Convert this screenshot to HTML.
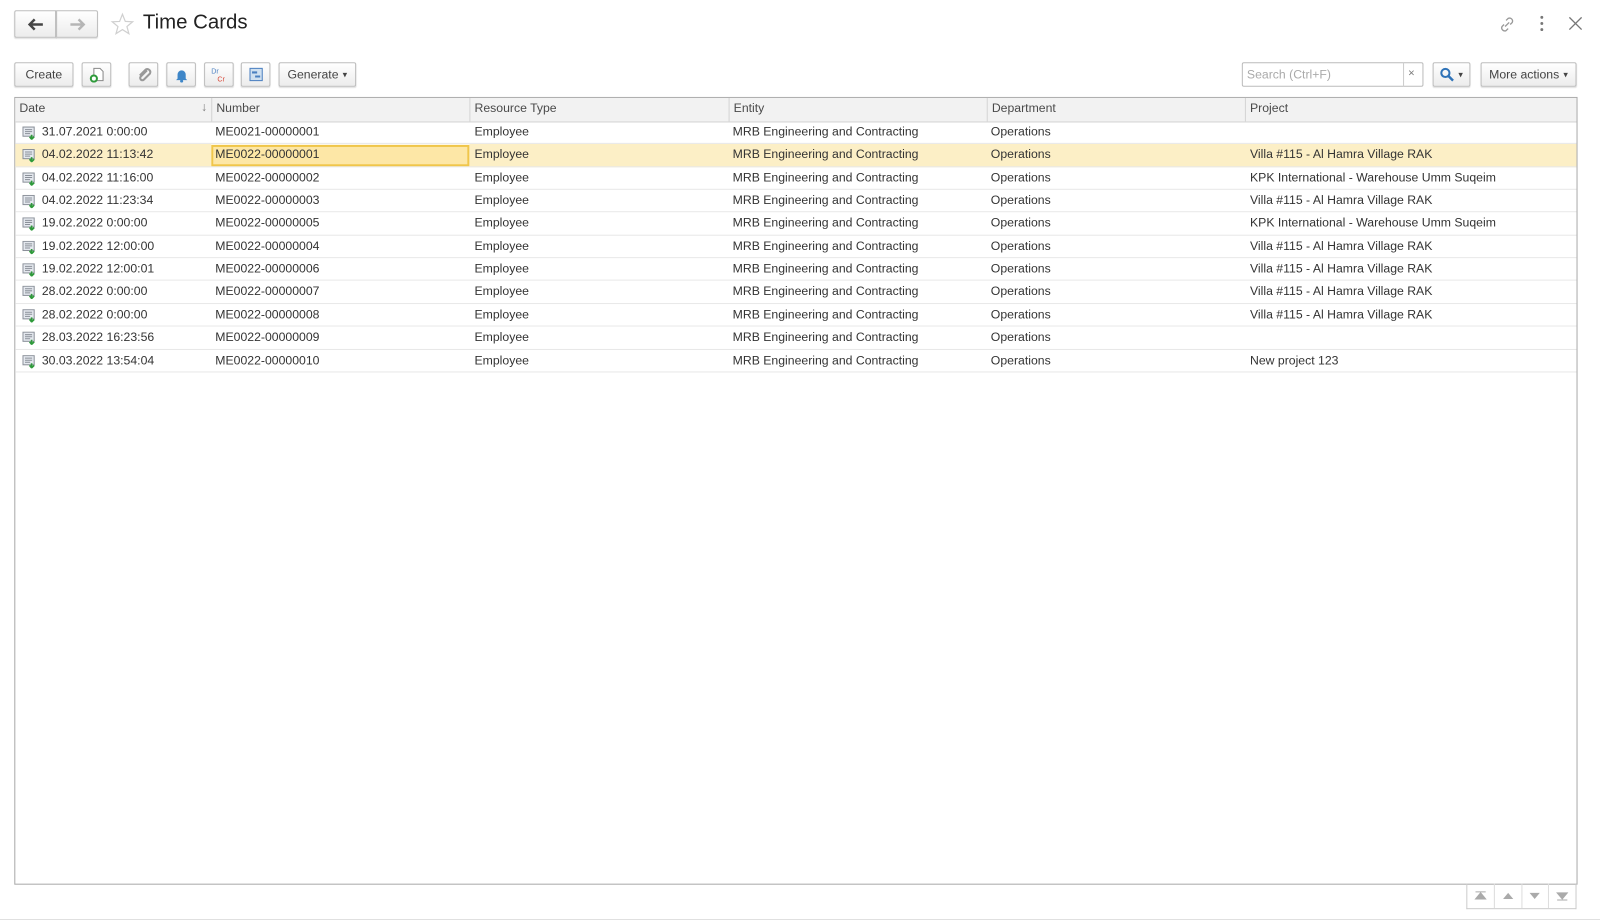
<!DOCTYPE html>
<html><head><meta charset="utf-8"><style>
*{box-sizing:border-box;margin:0;padding:0}
body{width:1600px;height:920px;background:#fff;font-family:"Liberation Sans",sans-serif;color:#404040;overflow:hidden;font-size:12px}
#wrap{position:absolute;left:0;top:0;width:1568px;height:902px;transform:scale(1.0204);transform-origin:0 0}
.abs{position:absolute}
.btn{position:absolute;height:24px;border:1px solid #bdbdbd;border-radius:2px;background:linear-gradient(#fff,#ececec);box-shadow:0 1px 1px rgba(0,0,0,.12);display:flex;align-items:center;justify-content:center;font-size:12px;color:#444}
.grid{position:absolute;left:14px;top:95px;width:1532px;height:772px;border:1px solid #a9a9a9}
.hdr{position:absolute;left:0;top:0;width:100%;height:24px;background:#f2f2f2;border-bottom:1px solid #d4d4d4}
.hc{position:absolute;top:0;height:23px;line-height:20px;padding-left:4px;border-left:1px solid #d4d4d4;font-size:12px;color:#4a4a4a}
.row{position:absolute;left:0;width:100%;height:22.4px;border-bottom:1px solid #e8e8e8;font-size:12px;line-height:21px;color:#333}
.row span{position:absolute;top:0;white-space:nowrap}
.sel{background:#fcefc6}
.ic{position:absolute;left:7px;top:5px}
</style></head><body><div id="wrap">
<div class="btn" style="left:14px;top:10px;width:41px;height:27px;border-radius:2px 0 0 2px"><svg width="16" height="12"><path d="M2 6H15M7 1L2 6L7 11" stroke="#444" stroke-width="2.4" fill="none"/></svg></div>
<div class="btn" style="left:55px;top:10px;width:41px;height:27px;border-radius:0 2px 2px 0"><svg width="16" height="12"><path d="M1 6H14M9 1L14 6L9 11" stroke="#b5b5b5" stroke-width="2.4" fill="none"/></svg></div>
<svg class="abs" style="left:108px;top:12px" width="24" height="24"><path d="M12 2L14.8 9 22 9.3 16.4 14 18.3 21 12 17 5.7 21 7.6 14 2 9.3 9.2 9Z" fill="none" stroke="#d0d0d0" stroke-width="1.2"/></svg>
<div class="abs" style="left:140px;top:11px;font-size:20px;color:#222">Time Cards</div>
<svg class="abs" style="left:1467px;top:14px" width="20" height="20"><path d="M8 12L12 8M9 6l2-2a3 3 0 014 4l-2 2M11 14l-2 2a3 3 0 01-4-4l2-2" stroke="#999" stroke-width="1.3" fill="none"/></svg>
<svg class="abs" style="left:1508px;top:15px" width="6" height="16"><circle cx="3" cy="2" r="1.4" fill="#777"/><circle cx="3" cy="8" r="1.4" fill="#777"/><circle cx="3" cy="14" r="1.4" fill="#777"/></svg>
<svg class="abs" style="left:1537px;top:16px" width="14" height="14"><path d="M1 1L13 13M13 1L1 13" stroke="#777" stroke-width="1.3"/></svg>

<div class="btn" style="left:14px;top:61px;width:58px">Create</div>
<div class="btn" style="left:80px;top:61px;width:29px"><svg width="16" height="16"><path d="M5 2h6l3 3v9H5z" fill="#fff" stroke="#888"/><circle cx="5" cy="12" r="3" fill="#fff" stroke="#2e9a3a" stroke-width="2"/></svg></div>
<div class="btn" style="left:126px;top:61px;width:29px"><svg width="16" height="16"><path d="M11 4L5 10a2 2 0 003 3l6-6a3 3 0 00-4-4L4 9" stroke="#999" stroke-width="2" fill="none"/></svg></div>
<div class="btn" style="left:163px;top:61px;width:29px"><svg width="16" height="16"><path d="M4 12V8a4 4 0 018 0v4l1.5 1.5h-11z" fill="#3e86c8"/><circle cx="8" cy="14.5" r="1.5" fill="#3e86c8"/></svg></div>
<div class="btn" style="left:200px;top:61px;width:29px"><svg width="18" height="16"><text x="1" y="7" font-size="7" fill="#4a7fc0" font-family="Liberation Sans">Dr</text><text x="7" y="15" font-size="7" fill="#d84a3a" font-family="Liberation Sans">Cr</text></svg></div>
<div class="btn" style="left:236px;top:61px;width:29px"><svg width="16" height="16"><rect x="2" y="2" width="12" height="12" fill="#cfe0f0" stroke="#4a7fc0"/><path d="M4 6h5M7 10h5" stroke="#4a7fc0" stroke-width="2"/></svg></div>
<div class="btn" style="left:273px;top:61px;width:76px">Generate <span style="font-size:9px;margin-left:4px">▾</span></div>

<div class="abs" style="left:1217px;top:61px;width:178px;height:24px;border:1px solid #bbb;border-radius:2px;background:#fff"></div>
<div class="abs" style="left:1222px;top:66px;color:#aaa;font-size:12px">Search (Ctrl+F)</div>
<div class="abs" style="left:1375px;top:61px;width:1px;height:24px;background:#ccc"></div>
<div class="abs" style="left:1380px;top:66px;color:#777;font-size:11px">×</div>
<div class="btn" style="left:1404px;top:61px;width:37px"><svg width="14" height="14"><circle cx="5.5" cy="5.5" r="4" stroke="#2f73b8" stroke-width="2" fill="none"/><path d="M8.5 8.5L13 13" stroke="#2f73b8" stroke-width="2.4"/></svg><span style="font-size:9px;margin-left:4px">▾</span></div>
<div class="btn" style="left:1451px;top:61px;width:94px">More actions <span style="font-size:9px;margin-left:4px">▾</span></div>

<div class="grid">
<div class="hdr">
<div class="hc" style="left:0;border-left:none">Date</div>
<div class="abs" style="left:182px;top:2px;color:#777">↓</div>
<div class="hc" style="left:192px">Number</div>
<div class="hc" style="left:445px">Resource Type</div>
<div class="hc" style="left:699px">Entity</div>
<div class="hc" style="left:952px">Department</div>
<div class="hc" style="left:1205px">Project</div>
</div>
<div class="abs" style="left:192px;top:46px;width:253px;height:21px;border:2px solid #f0c64a;background:#fde7a6"></div>
<div id="rows"></div>
</div>
<script>
var d=[["31.07.2021 0:00:00","ME0021-00000001",""],["04.02.2022 11:13:42","ME0022-00000001","Villa #115 - Al Hamra Village RAK"],["04.02.2022 11:16:00","ME0022-00000002","KPK International - Warehouse Umm Suqeim"],["04.02.2022 11:23:34","ME0022-00000003","Villa #115 - Al Hamra Village RAK"],["19.02.2022 0:00:00","ME0022-00000005","KPK International - Warehouse Umm Suqeim"],["19.02.2022 12:00:00","ME0022-00000004","Villa #115 - Al Hamra Village RAK"],["19.02.2022 12:00:01","ME0022-00000006","Villa #115 - Al Hamra Village RAK"],["28.02.2022 0:00:00","ME0022-00000007","Villa #115 - Al Hamra Village RAK"],["28.02.2022 0:00:00","ME0022-00000008","Villa #115 - Al Hamra Village RAK"],["28.03.2022 16:23:56","ME0022-00000009",""],["30.03.2022 13:54:04","ME0022-00000010","New project 123"]];
var h="";
d.forEach(function(r,i){h+='<div class="row'+(i==1?' sel':'')+'" style="top:'+(23+i*22.35)+'px;'+(i==1?'background:transparent':'')+'"><svg class="ic" width="14" height="13"><rect x="0.5" y="0.5" width="11" height="9" fill="#e4e8ee" stroke="#8a9099"/><path d="M2.5 3h7M2.5 5h7M2.5 7h5" stroke="#8a9099"/><path d="M9 8v4M7 10l2 2.5 2.5-2.5" stroke="#2e9a3a" stroke-width="1.6" fill="none"/></svg><span style="left:26px">'+r[0]+'</span><span style="left:196px">'+r[1]+'</span><span style="left:450px">Employee</span><span style="left:703px">MRB Engineering and Contracting</span><span style="left:956px">Operations</span><span style="left:1210px">'+r[2]+'</span></div>';});
document.getElementById("rows").innerHTML='<div class="abs" style="left:0;top:45.35px;width:192px;height:22.4px;background:#fcefc6"></div><div class="abs" style="left:445px;top:45.35px;width:1085px;height:22.4px;background:#fcefc6"></div>'+h;
</script>
<div class="abs" style="left:1437px;top:866px;width:108px;height:25px;border:1px solid #ccc;border-top:none;display:flex">
<div style="flex:1;border-right:1px solid #ddd;display:flex;align-items:center;justify-content:center"><svg width="12" height="10"><path d="M1 1h10M6 2L1 8h10z" stroke="#aaa" fill="#aaa"/></svg></div>
<div style="flex:1;border-right:1px solid #ddd;display:flex;align-items:center;justify-content:center"><svg width="12" height="8"><path d="M6 1L1 7h10z" fill="#aaa"/></svg></div>
<div style="flex:1;border-right:1px solid #ddd;display:flex;align-items:center;justify-content:center"><svg width="12" height="8"><path d="M6 7L1 1h10z" fill="#aaa"/></svg></div>
<div style="flex:1;display:flex;align-items:center;justify-content:center"><svg width="12" height="10"><path d="M1 9h10M6 8L1 2h10z" stroke="#aaa" fill="#aaa"/></svg></div>
</div>
<div class="abs" style="left:0;top:901px;width:1600px;height:1px;background:#ccc"></div>
</div></body></html>
